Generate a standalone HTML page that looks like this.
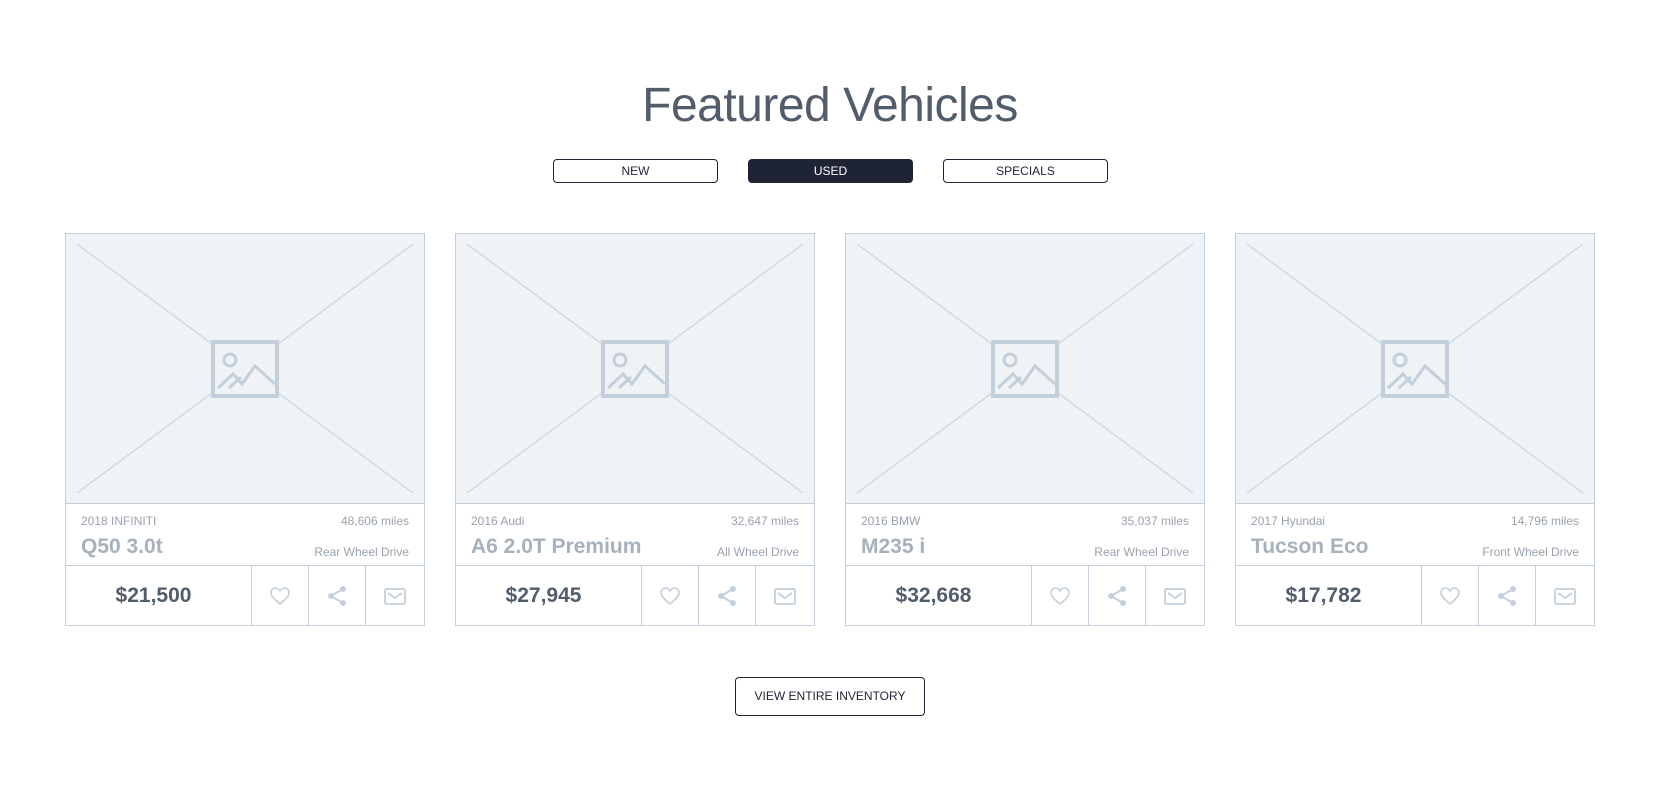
<!DOCTYPE html>
<html><head><meta charset="utf-8"><style>
*{box-sizing:border-box;margin:0;padding:0}
body{width:1660px;height:787px;background:#fff;font-family:"Liberation Sans",Arial,sans-serif;position:relative;overflow:hidden}
h1{position:absolute;top:78px;left:0;width:1660px;text-align:center;font-weight:400;font-size:48px;color:#525d6b;letter-spacing:-0.5px}
.tab{position:absolute;top:159px;height:24px;width:165px;border:1px solid #1e2433;border-radius:4px;font-size:12px;color:#1e2433;text-align:center;line-height:22px}
.tab.on{background:#1e2433;color:#fff}
.card{position:absolute;top:233px;width:360px;height:393px;border:1px solid #c3cfda}
.img{position:absolute;left:0;top:0;width:358px;height:270px;background:#eff3f6;border-bottom:1px solid #c3cfda}
.info{position:absolute;top:270px;left:0;width:358px;height:62px;border-bottom:1px solid #c3cfda}
.yr{position:absolute;left:15px;top:10px;font-size:12px;color:#98a2ad}
.mi{position:absolute;right:15px;top:10px;font-size:12px;color:#98a2ad}
.mo{position:absolute;left:15px;top:31px;font-size:21px;font-weight:700;color:#a6b1bc}
.dr{position:absolute;right:15px;top:41px;font-size:12px;color:#98a2ad}
.bot{position:absolute;top:332px;left:0;width:358px;height:59px;display:flex}
.pr{width:186px;border-right:1px solid #c3cfda;text-align:center;line-height:59px;font-size:21px;font-weight:700;color:#525d6b;padding-right:10px}
.ic{width:57px;border-right:1px solid #c3cfda;display:flex;align-items:center;justify-content:center}
.ic:last-child{border-right:none;flex:1}
.btn{position:absolute;left:735px;top:677px;width:190px;height:39px;border:1px solid #1e2433;border-radius:4px;text-align:center;line-height:37px;font-size:12px;color:#1e2433}
svg.ph{display:block}
</style></head><body>
<h1>Featured Vehicles</h1>
<div class="tab" style="left:553px">NEW</div>
<div class="tab on" style="left:748px">USED</div>
<div class="tab" style="left:943px">SPECIALS</div>

<div class="card" style="left:65px">
<div class="img"><svg class="ph" width="358" height="270"><g stroke="#c3cfda" stroke-width="1"><line x1="11" y1="10" x2="347" y2="259"/><line x1="347" y1="10" x2="11" y2="259"/></g><rect x="147" y="108" width="64" height="54" fill="#eff3f6" stroke="#c3cfda" stroke-width="4"/><circle cx="164" cy="126" r="6" fill="none" stroke="#c3cfda" stroke-width="3"/><polyline points="152,154 167,140 176,150 189,132 209,150" fill="none" stroke="#c3cfda" stroke-width="3"/><line x1="163" y1="154" x2="175" y2="143" stroke="#c3cfda" stroke-width="3"/></svg></div>
<div class="info"><span class="yr">2018 INFINITI</span><span class="mi">48,606 miles</span><span class="mo">Q50 3.0t</span><span class="dr">Rear Wheel Drive</span></div>
<div class="bot"><div class="pr">$21,500</div>
<div class="ic"><svg width="22" height="20" viewBox="0 0 22 20"><path d="M11 18C5 13 2 10 2 6.5 2 4 4 2 6.5 2 8.5 2 10 3.3 11 5 12 3.3 13.5 2 15.5 2 18 2 20 4 20 6.5 20 10 17 13 11 18Z" fill="none" stroke="#c3cfda" stroke-width="1.6"/></svg></div>
<div class="ic"><svg width="22" height="22" viewBox="0 0 22 22"><g fill="#c3cfda"><circle cx="17" cy="4" r="3"/><circle cx="5" cy="11" r="3"/><circle cx="17" cy="18" r="3"/></g><path d="M17 4L5 11 17 18" stroke="#c3cfda" stroke-width="2" fill="none"/></svg></div>
<div class="ic"><svg width="24" height="20" viewBox="0 0 24 20"><rect x="2" y="3" width="20" height="15" rx="1.5" fill="none" stroke="#c3cfda" stroke-width="1.8"/><path d="M5 7L12 12 19 7" fill="none" stroke="#c3cfda" stroke-width="1.8"/></svg></div></div>
</div>

<div class="card" style="left:455px">
<div class="img"><svg class="ph" width="358" height="270"><g stroke="#c3cfda" stroke-width="1"><line x1="11" y1="10" x2="347" y2="259"/><line x1="347" y1="10" x2="11" y2="259"/></g><rect x="147" y="108" width="64" height="54" fill="#eff3f6" stroke="#c3cfda" stroke-width="4"/><circle cx="164" cy="126" r="6" fill="none" stroke="#c3cfda" stroke-width="3"/><polyline points="152,154 167,140 176,150 189,132 209,150" fill="none" stroke="#c3cfda" stroke-width="3"/><line x1="163" y1="154" x2="175" y2="143" stroke="#c3cfda" stroke-width="3"/></svg></div>
<div class="info"><span class="yr">2016 Audi</span><span class="mi">32,647 miles</span><span class="mo">A6 2.0T Premium</span><span class="dr">All Wheel Drive</span></div>
<div class="bot"><div class="pr">$27,945</div>
<div class="ic"><svg width="22" height="20" viewBox="0 0 22 20"><path d="M11 18C5 13 2 10 2 6.5 2 4 4 2 6.5 2 8.5 2 10 3.3 11 5 12 3.3 13.5 2 15.5 2 18 2 20 4 20 6.5 20 10 17 13 11 18Z" fill="none" stroke="#c3cfda" stroke-width="1.6"/></svg></div>
<div class="ic"><svg width="22" height="22" viewBox="0 0 22 22"><g fill="#c3cfda"><circle cx="17" cy="4" r="3"/><circle cx="5" cy="11" r="3"/><circle cx="17" cy="18" r="3"/></g><path d="M17 4L5 11 17 18" stroke="#c3cfda" stroke-width="2" fill="none"/></svg></div>
<div class="ic"><svg width="24" height="20" viewBox="0 0 24 20"><rect x="2" y="3" width="20" height="15" rx="1.5" fill="none" stroke="#c3cfda" stroke-width="1.8"/><path d="M5 7L12 12 19 7" fill="none" stroke="#c3cfda" stroke-width="1.8"/></svg></div></div>
</div>

<div class="card" style="left:845px">
<div class="img"><svg class="ph" width="358" height="270"><g stroke="#c3cfda" stroke-width="1"><line x1="11" y1="10" x2="347" y2="259"/><line x1="347" y1="10" x2="11" y2="259"/></g><rect x="147" y="108" width="64" height="54" fill="#eff3f6" stroke="#c3cfda" stroke-width="4"/><circle cx="164" cy="126" r="6" fill="none" stroke="#c3cfda" stroke-width="3"/><polyline points="152,154 167,140 176,150 189,132 209,150" fill="none" stroke="#c3cfda" stroke-width="3"/><line x1="163" y1="154" x2="175" y2="143" stroke="#c3cfda" stroke-width="3"/></svg></div>
<div class="info"><span class="yr">2016 BMW</span><span class="mi">35,037 miles</span><span class="mo">M235 i</span><span class="dr">Rear Wheel Drive</span></div>
<div class="bot"><div class="pr">$32,668</div>
<div class="ic"><svg width="22" height="20" viewBox="0 0 22 20"><path d="M11 18C5 13 2 10 2 6.5 2 4 4 2 6.5 2 8.5 2 10 3.3 11 5 12 3.3 13.5 2 15.5 2 18 2 20 4 20 6.5 20 10 17 13 11 18Z" fill="none" stroke="#c3cfda" stroke-width="1.6"/></svg></div>
<div class="ic"><svg width="22" height="22" viewBox="0 0 22 22"><g fill="#c3cfda"><circle cx="17" cy="4" r="3"/><circle cx="5" cy="11" r="3"/><circle cx="17" cy="18" r="3"/></g><path d="M17 4L5 11 17 18" stroke="#c3cfda" stroke-width="2" fill="none"/></svg></div>
<div class="ic"><svg width="24" height="20" viewBox="0 0 24 20"><rect x="2" y="3" width="20" height="15" rx="1.5" fill="none" stroke="#c3cfda" stroke-width="1.8"/><path d="M5 7L12 12 19 7" fill="none" stroke="#c3cfda" stroke-width="1.8"/></svg></div></div>
</div>

<div class="card" style="left:1235px">
<div class="img"><svg class="ph" width="358" height="270"><g stroke="#c3cfda" stroke-width="1"><line x1="11" y1="10" x2="347" y2="259"/><line x1="347" y1="10" x2="11" y2="259"/></g><rect x="147" y="108" width="64" height="54" fill="#eff3f6" stroke="#c3cfda" stroke-width="4"/><circle cx="164" cy="126" r="6" fill="none" stroke="#c3cfda" stroke-width="3"/><polyline points="152,154 167,140 176,150 189,132 209,150" fill="none" stroke="#c3cfda" stroke-width="3"/><line x1="163" y1="154" x2="175" y2="143" stroke="#c3cfda" stroke-width="3"/></svg></div>
<div class="info"><span class="yr">2017 Hyundai</span><span class="mi">14,796 miles</span><span class="mo">Tucson Eco</span><span class="dr">Front Wheel Drive</span></div>
<div class="bot"><div class="pr">$17,782</div>
<div class="ic"><svg width="22" height="20" viewBox="0 0 22 20"><path d="M11 18C5 13 2 10 2 6.5 2 4 4 2 6.5 2 8.5 2 10 3.3 11 5 12 3.3 13.5 2 15.5 2 18 2 20 4 20 6.5 20 10 17 13 11 18Z" fill="none" stroke="#c3cfda" stroke-width="1.6"/></svg></div>
<div class="ic"><svg width="22" height="22" viewBox="0 0 22 22"><g fill="#c3cfda"><circle cx="17" cy="4" r="3"/><circle cx="5" cy="11" r="3"/><circle cx="17" cy="18" r="3"/></g><path d="M17 4L5 11 17 18" stroke="#c3cfda" stroke-width="2" fill="none"/></svg></div>
<div class="ic"><svg width="24" height="20" viewBox="0 0 24 20"><rect x="2" y="3" width="20" height="15" rx="1.5" fill="none" stroke="#c3cfda" stroke-width="1.8"/><path d="M5 7L12 12 19 7" fill="none" stroke="#c3cfda" stroke-width="1.8"/></svg></div></div>
</div>

<div class="btn">VIEW ENTIRE INVENTORY</div>
</body></html>
